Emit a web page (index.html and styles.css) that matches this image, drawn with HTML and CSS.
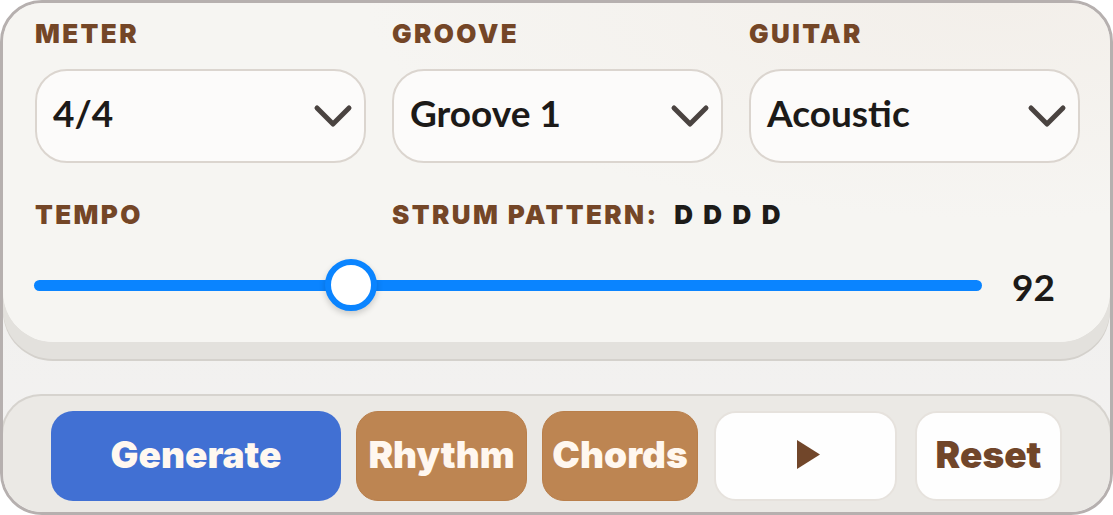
FILE: index.html
```html
<!DOCTYPE html>
<html lang="en">
<head>
<meta charset="utf-8">
<title>Strum Generator</title>
<link rel="stylesheet" href="styles.css">
</head>
<body>
<div class="frame">
  <section class="card">
    <div class="label">METER</div>
    <div class="label">GROOVE</div>
    <div class="label">GUITAR</div>

    <button class="select" type="button"><span>4/4</span>
      <svg class="chev" viewBox="0 0 40 25" width="40" height="25"><polyline points="4,4 20,20 36,4"/></svg>
    </button>
    <button class="select" type="button"><span>Groove 1</span>
      <svg class="chev" viewBox="0 0 40 25" width="40" height="25"><polyline points="4,4 20,20 36,4"/></svg>
    </button>
    <button class="select" type="button"><span>Acoustic</span>
      <svg class="chev" viewBox="0 0 40 25" width="40" height="25"><polyline points="4,4 20,20 36,4"/></svg>
    </button>

    <div class="label label-row2">TEMPO</div>
    <div class="label label-row2 span2">STRUM PATTERN: <span class="pattern">D D D D</span></div>

    <div class="slider-row">
      <input class="range" type="range" min="40" max="200" value="92">
      <span class="value">92</span>
    </div>
  </section>

  <footer class="bar">
    <button class="btn btn-generate" type="button">Generate</button>
    <button class="btn btn-tan btn-rhythm" type="button">Rhythm</button>
    <button class="btn btn-tan btn-chords" type="button">Chords</button>
    <button class="btn btn-white btn-play" type="button" aria-label="Play">
      <svg viewBox="0 0 23 29" width="23" height="29"><polygon points="0,0 23,14.5 0,29"/></svg>
    </button>
    <button class="btn btn-white btn-reset" type="button">Reset</button>
  </footer>
</div>
</body>
</html>
```

FILE: styles.css
```css
* { box-sizing: border-box; }

html, body {
  margin: 0;
  padding: 0;
  background: #ffffff;
}

body {
  font-family: "Lato", "Liberation Sans", sans-serif;
}

.frame {
  width: 1113px;
  height: 515px;
  border: 3px solid #b6b0af;
  border-radius: 42px;
  overflow: hidden;
  background: linear-gradient(180deg, #efeeec 0%, #f3f2f1 100%);
  display: flex;
  flex-direction: column;
}

.card {
  flex: none;
  height: 339px;
  padding: 15px 30px 0 32px;
  background: radial-gradient(ellipse at 90% 0%, #f3efea 0%, #f6f5f2 45%);
  border-radius: 0 0 50px 50px;
  box-shadow: 0 17px 0 #e3e1dd, 0 19px 0 #d4d1cc;
  display: grid;
  grid-template-columns: repeat(3, 331px);
  grid-template-rows: 31px 94px 31px 52px;
  column-gap: 26px;
  row-gap: 0;
  position: relative;
  z-index: 1;
}

.label {
  font-family: "Inter", "Lato", sans-serif;
  font-weight: 900;
  font-size: 26px;
  line-height: 31px;
  letter-spacing: 2.4px;
  color: #744627;
  white-space: nowrap;
}

.select {
  margin-top: 20px;
  height: 94px;
  width: 331px;
  border: 2px solid #dbd5cf;
  border-radius: 32px;
  background: #fcfbfa;
  padding: 0 11px 7px 16px;
  display: flex;
  align-items: center;
  justify-content: space-between;
  font-family: "Lato", sans-serif;
  font-weight: 700;
  font-size: 37px;
  color: #1c1a18;
  cursor: pointer;
}

.chev {
  flex: none;
  margin-top: 7px;
}

.chev polyline {
  fill: none;
  stroke: #4a4340;
  stroke-width: 5;
  stroke-linecap: round;
  stroke-linejoin: round;
}

.label-row2 {
  margin-top: 56px;
}

.span2 {
  grid-column: 2 / span 2;
}

.pattern {
  color: #1d1b19;
  letter-spacing: 2.6px;
  margin-left: 8px;
}

.slider-row {
  grid-column: 1 / span 3;
  margin-top: 85px;
  height: 52px;
  display: flex;
  align-items: center;
  gap: 30px;
}

.range {
  -webkit-appearance: none;
  appearance: none;
  width: 948px;
  height: 52px;
  margin: 0 0 0 -1px;
  background: transparent;
}

.range::-webkit-slider-runnable-track {
  height: 11px;
  border-radius: 6px;
  background: #0a84ff;
}

.range::-webkit-slider-thumb {
  -webkit-appearance: none;
  appearance: none;
  width: 52px;
  height: 52px;
  margin-top: -20.5px;
  border-radius: 50%;
  background: #ffffff;
  border: 6px solid #0a84ff;
  box-shadow: 0 3px 6px rgba(0, 0, 0, 0.18);
}

.value {
  font-weight: 700;
  font-size: 37px;
  color: #1c1a18;
  line-height: 1;
  margin-top: 2px;
}

.bar {
  flex: 1;
  margin: 52px -2px 0;
  border: 2px solid #d6d3ce;
  border-bottom: none;
  border-radius: 40px 40px 0 0;
  background: #ebe9e5;
  padding: 15px 48px 0 48px;
  display: flex;
  align-items: flex-start;
  gap: 15px;
}

.btn {
  flex: none;
  height: 90px;
  border-radius: 22px;
  border: none;
  font-family: "Inter", "Lato", sans-serif;
  font-weight: 900;
  font-size: 37px;
  display: flex;
  align-items: center;
  justify-content: center;
  padding: 0 0 3px;
  cursor: pointer;
}

.btn-generate {
  width: 290px;
  background: #4170d3;
  color: #fff8f0;
}

.btn-tan {
  background: #bd8552;
  color: #fff7ef;
  border: 1px solid #b97f4b;
}

.btn-rhythm { width: 171px; }
.btn-chords { width: 156px; }

.btn-white {
  background: #fefefe;
  border: 2px solid #e6e2dd;
  color: #71462a;
}

.btn-play {
  width: 183px;
  margin-left: 1px;
}

.btn-play svg {
  margin-left: 6px;
}

.btn-play polygon {
  fill: #71462a;
}

.btn-reset {
  width: 147px;
  margin-left: 3px;
}
```
